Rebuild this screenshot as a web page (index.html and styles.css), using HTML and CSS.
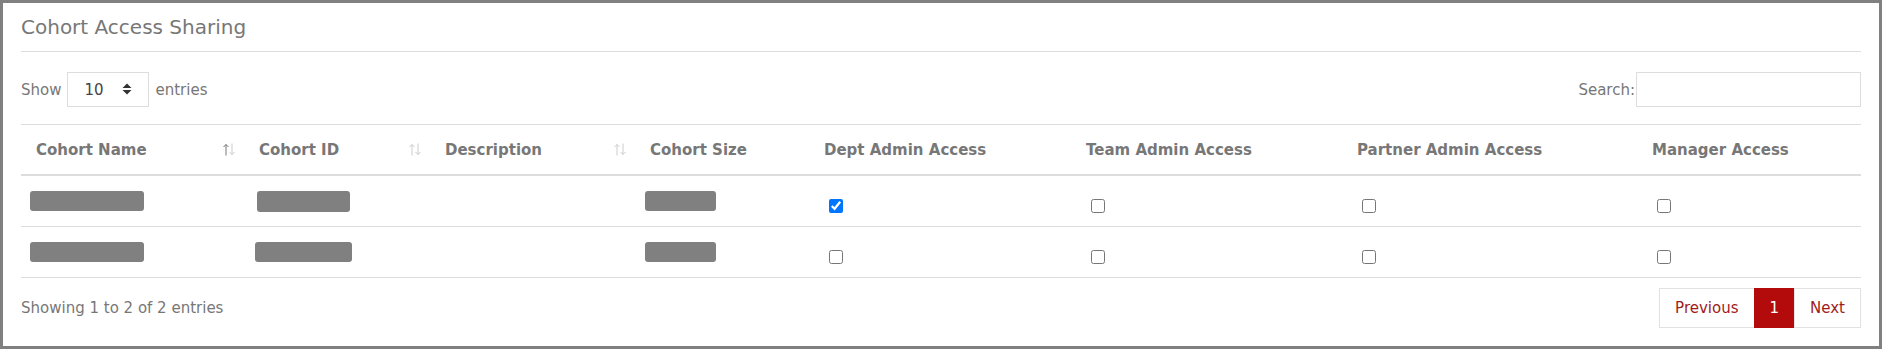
FILE: index.html
```html
<!DOCTYPE html>
<html lang="en">
<head>
  <meta charset="UTF-8">
  <meta name="viewport" content="width=device-width, initial-scale=1.0">
  <title>Cohort Access Sharing</title>
  <link rel="stylesheet" href="styles.css">
</head>
<body>
  <div class="panel">
    <h2 class="panel-title">Cohort Access Sharing</h2>

    <div class="toolbar">
      <label class="length">
        Show
        <span class="select-wrap">
          <select>
            <option>10</option>
            <option>25</option>
            <option>50</option>
            <option>100</option>
          </select>
          <svg class="select-arrows" width="10" height="12" viewBox="0 0 10 12"><path d="M5 0.5L9.5 5H0.5Z M5 11.5L9.5 7H0.5Z" fill="#333"/></svg>
        </span>
        entries
      </label>
      <label class="search">Search:<input type="search"></label>
    </div>

    <table class="grid">
      <colgroup>
        <col style="width:223px"><col style="width:186px"><col style="width:205px"><col style="width:174px">
        <col style="width:262px"><col style="width:271px"><col style="width:295px"><col style="width:224px">
      </colgroup>
      <thead>
        <tr>
          <th><div class="th-sort">Cohort Name
            <svg width="14" height="13" viewBox="0 0 14 13"><path d="M4 12.5V1.5M1.5 4L4 1.5 6.5 4" stroke="#777" fill="none"/><path d="M10 0.5v11M7.5 9L10 11.5 12.5 9" stroke="#ccc" fill="none"/></svg></div></th>
          <th><div class="th-sort">Cohort ID
            <svg width="14" height="13" viewBox="0 0 14 13"><path d="M4 12.5V1.5M1.5 4L4 1.5 6.5 4" stroke="#ccc" fill="none"/><path d="M10 0.5v11M7.5 9L10 11.5 12.5 9" stroke="#ccc" fill="none"/></svg></div></th>
          <th><div class="th-sort">Description
            <svg width="14" height="13" viewBox="0 0 14 13"><path d="M4 12.5V1.5M1.5 4L4 1.5 6.5 4" stroke="#ccc" fill="none"/><path d="M10 0.5v11M7.5 9L10 11.5 12.5 9" stroke="#ccc" fill="none"/></svg></div></th>
          <th>Cohort Size</th>
          <th>Dept Admin Access</th>
          <th>Team Admin Access</th>
          <th>Partner Admin Access</th>
          <th>Manager Access</th>
        </tr>
      </thead>
      <tbody>
        <tr>
          <td><span class="redact redact-name"></span></td>
          <td><span class="redact redact-id"></span></td>
          <td></td>
          <td><span class="redact redact-size"></span></td>
          <td><input type="checkbox" checked></td>
          <td><input type="checkbox"></td>
          <td><input type="checkbox"></td>
          <td><input type="checkbox"></td>
        </tr>
        <tr>
          <td><span class="redact redact-name"></span></td>
          <td><span class="redact redact-id wide"></span></td>
          <td></td>
          <td><span class="redact redact-size"></span></td>
          <td><input type="checkbox"></td>
          <td><input type="checkbox"></td>
          <td><input type="checkbox"></td>
          <td><input type="checkbox"></td>
        </tr>
      </tbody>
    </table>

    <div class="table-footer">
      <div class="info">Showing 1 to 2 of 2 entries</div>
      <ul class="pager">
        <li><a href="#">Previous</a></li>
        <li class="active"><a href="#">1</a></li>
        <li><a href="#">Next</a></li>
      </ul>
    </div>
  </div>
</body>
</html>
```

FILE: styles.css
```css
/* Base */
body {
  margin: 0;
  font-family: 'DejaVu Sans', Verdana, sans-serif;
  font-size: 15px;
  color: #777;
  background: #fff;
}
.panel {
  box-sizing: border-box;
  height: 349px;
  border: 3px solid #808080;
  padding: 12px 18px 0;
}
.panel-title {
  margin: 0;
  font-size: 20px;
  font-weight: normal;
  line-height: 24px;
  color: #777;
  padding-bottom: 12px;
  border-bottom: 1px solid #ddd;
}

/* Toolbar */
.toolbar {
  display: flex;
  justify-content: space-between;
  align-items: center;
  margin-top: 20px;
  height: 35px;
}
.length {
  display: flex;
  align-items: center;
  gap: 6px;
}
.select-wrap {
  position: relative;
  display: inline-block;
}
.select-wrap select {
  appearance: none;
  -webkit-appearance: none;
  box-sizing: border-box;
  width: 82px;
  height: 35px;
  padding: 0 0 0 16px;
  border: 1px solid #ddd;
  border-radius: 0;
  background: #fff;
  font-family: inherit;
  font-size: 15px;
  color: #444;
}
.select-arrows {
  position: absolute;
  left: 55px;
  top: 11px;
  pointer-events: none;
}
.search {
  display: flex;
  align-items: center;
}
.search input {
  box-sizing: border-box;
  width: 225px;
  height: 35px;
  margin-left: 1px;
  border: 1px solid #ddd;
  font-family: inherit;
  font-size: 15px;
  outline: none;
}

/* Table */
.grid {
  margin-top: 17px;
  width: 1840px;
  table-layout: fixed;
  border-collapse: collapse;
  border-top: 1px solid #ddd;
}
.grid th {
  height: 49px;
  padding: 0 8px 0 15px;
  text-align: left;
  font-weight: bold;
  color: #777;
  border-bottom: 2px solid #ddd;
}
.th-sort {
  display: flex;
  justify-content: space-between;
  align-items: center;
}
.grid td {
  height: 50px;
  padding: 0 10px;
  border-bottom: 1px solid #ddd;
  vertical-align: middle;
}
.redact {
  display: block;
  height: 20px;
  background: #808080;
  border-radius: 3px;
}
.redact-name { width: 114px; margin-left: -1px; }
.redact-id { width: 93px; margin-left: 3px; height: 21px; }
.redact-id.wide { width: 97px; margin-left: 1px; height: 20px; }
.redact-size { width: 71px; }
.grid input[type="checkbox"] {
  width: 14px;
  height: 14px;
  margin: 10px 0 0 10px;
  vertical-align: middle;
  accent-color: #0075ff;
}

/* Footer */
.table-footer {
  display: flex;
  justify-content: space-between;
  align-items: center;
  margin-top: 10px;
}
.pager {
  display: flex;
  list-style: none;
  margin: 0;
  padding: 0;
}
.pager li a {
  display: block;
  height: 38px;
  line-height: 38px;
  padding: 0 15px;
  border: 1px solid #e2e2e2;
  margin-left: -1px;
  color: #a01c1c;
  text-decoration: none;
}
.pager li.active a {
  background: #b30b0b;
  border-color: #b30b0b;
  color: #fff;
}
```
